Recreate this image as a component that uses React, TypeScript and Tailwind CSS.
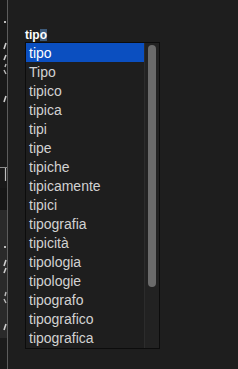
const WORDS = [
  'tipo',
  'Tipo',
  'tipico',
  'tipica',
  'tipi',
  'tipe',
  'tipiche',
  'tipicamente',
  'tipici',
  'tipografia',
  'tipicità',
  'tipologia',
  'tipologie',
  'tipografo',
  'tipografico',
  'tipografica',
]

function SideStrip() {
  return (
    <div className="relative w-[7px] h-full flex flex-col bg-[#191919]">
      <svg width="7" height="369" className="absolute left-0 top-0">
        <rect x="4" y="21" width="2" height="2" fill="#bdbdbd" />
        <path d="M6 43 L4 49" stroke="#cfcfcf" strokeWidth="1.6" />
        <path d="M6 55 L4 60" stroke="#cfcfcf" strokeWidth="1.6" />
        <path d="M6 64 L5 67" stroke="#bdbdbd" strokeWidth="1.4" />
        <path d="M4 70 L6 74" stroke="#bdbdbd" strokeWidth="1.4" />
        <path d="M6 96 L4 102" stroke="#cfcfcf" strokeWidth="1.6" />
        <path d="M0 167.5 L7 167.5" stroke="#8a8a8a" strokeWidth="1" />
        <path d="M5.5 168 L5.5 181" stroke="#bdbdbd" strokeWidth="1.2" />
        <rect x="4" y="246" width="2" height="2" fill="#bdbdbd" />
        <path d="M6 260 L4 266" stroke="#cfcfcf" strokeWidth="1.6" />
        <path d="M6 268 L4 273" stroke="#cfcfcf" strokeWidth="1.6" />
        <path d="M6 292 L5 296" stroke="#bdbdbd" strokeWidth="1.4" />
        <path d="M4 299 L6 303" stroke="#bdbdbd" strokeWidth="1.4" />
        <path d="M6 324 L4 330" stroke="#cfcfcf" strokeWidth="1.6" />
      </svg>
      <div className="h-[188px]" />
      <div className="h-[22px] bg-[#161616]" />
      <div className="h-[128px] bg-[#2a2a2a]" />
      <div className="flex-1 bg-[#1b1b1b]" />
    </div>
  )
}

export default function App() {
  return (
    <div
      className="flex w-[238px] h-[369px] overflow-hidden bg-[#1e1e1e] text-[#d6d6d6]"
      style={{ fontFamily: '"Liberation Sans", Arial, sans-serif' }}
    >
      <SideStrip />
      <div className="w-px h-full bg-[#5c5c5c]" />
      <div className="flex-1 flex flex-col pl-[17px] pt-[28px]">
        <div className="flex items-center h-[13px] text-[12px] font-bold text-white leading-none">
          <span>tip</span>
          <span className="bg-[#3d5a7a]">o</span>
        </div>
        <div className="mt-[1px] w-[135px] h-[307px] flex border border-[#0c0c0c] bg-[#1e1e1e]">
          <ul className="flex-1 flex flex-col">
            {WORDS.map((w, i) => (
              <li
                key={w}
                className={`h-[19px] flex items-center pl-[3px] text-[14px] leading-none ${
                  i === 0 ? 'bg-[#0b4fc0] text-white' : 'text-[#d2d2d2]'
                }`}
              >
                {w}
              </li>
            ))}
          </ul>
          <div className="w-[15px] h-full flex justify-center pt-[2px] pb-[60px] bg-[#222222] border-l border-[#2c2c2c]">
            <div className="w-[8px] h-[242px] rounded-full bg-[#6b6b6b]" />
          </div>
        </div>
      </div>
    </div>
  )
}
